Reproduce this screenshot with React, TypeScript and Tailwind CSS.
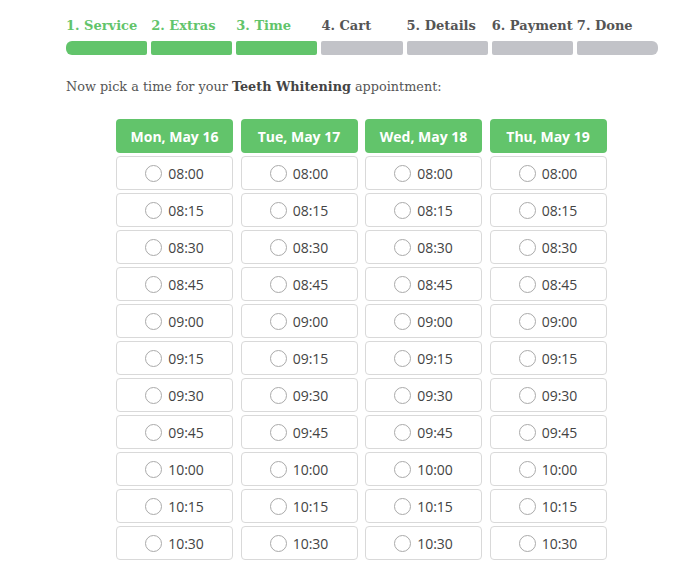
const GREEN = 'bg-[#62c46b]'

const STEPS = ['1. Service', '2. Extras', '3. Time', '4. Cart', '5. Details', '6. Payment', '7. Done']
const DAYS = ['Mon, May 16', 'Tue, May 17', 'Wed, May 18', 'Thu, May 19']
const TIMES = ['08:00', '08:15', '08:30', '08:45', '09:00', '09:15', '09:30', '09:45', '10:00', '10:15', '10:30']

export default function App() {
  const current = 3
  return (
    <div className="w-[700px] h-[562px] overflow-hidden bg-white pl-[66px] pt-[17px]" style={{ fontFamily: '"DejaVu Serif", serif' }}>
      {/* Progress */}
      <div className="grid grid-cols-7 gap-x-[4px] w-[592px]">
        {STEPS.map((s, i) => (
          <div key={s} className={`text-[13px] font-bold leading-[18px] whitespace-nowrap ${i < current ? 'text-[#62c46b]' : 'text-[#555]'}`}>{s}</div>
        ))}
        {STEPS.map((s, i) => (
          <div key={s + 'bar'} className={`mt-[6px] h-[14px] ${i < current ? GREEN : 'bg-[#c2c3c8]'} ${i === 0 ? 'rounded-l-[6px] rounded-r-[2px]' : i === STEPS.length - 1 ? 'rounded-r-[6px] rounded-l-[2px]' : 'rounded-[2px]'}`} />
        ))}
      </div>

      <p className="mt-[23px] text-[12.8px] text-[#555] leading-[18px]">
        Now pick a time for your <b className="font-bold text-[#444]">Teeth Whitening</b> appointment:
      </p>

      {/* Slots */}
      <div className="mt-[23px] ml-[50px] flex gap-x-[7.5px]" style={{ fontFamily: '"Open Sans", sans-serif' }}>
        {DAYS.map(d => (
          <div key={d} className="w-[117px] flex flex-col gap-y-[3px]">
            <div className={`${GREEN} h-[34px] rounded-[4px] flex items-center justify-center text-white text-[14px] font-bold`}>{d}</div>
            {TIMES.map(t => (
              <button key={t} className="h-[34px] rounded-[4px] border border-[#d9d9d9] bg-white flex items-center justify-center gap-[6px] text-[14px] text-[#444]">
                <span className="w-[17px] h-[17px] rounded-full border border-[#aaa] bg-white" />
                <span>{t}</span>
              </button>
            ))}
          </div>
        ))}
      </div>
    </div>
  )
}
